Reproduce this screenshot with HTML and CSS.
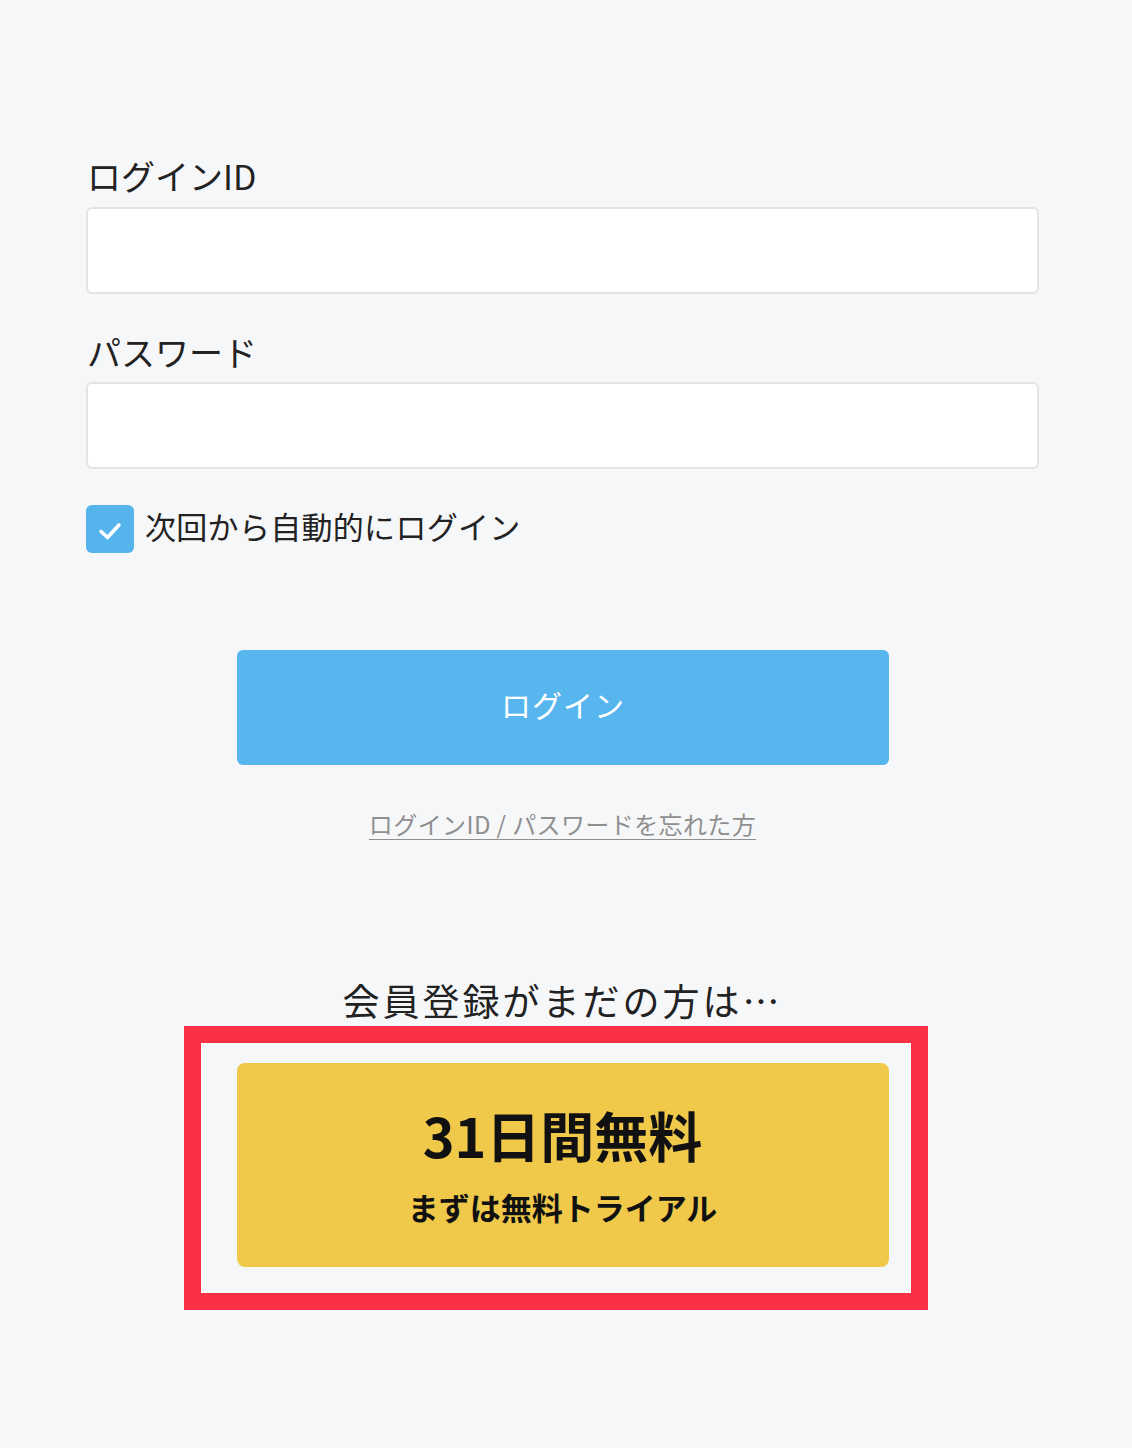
FILE: index.html
```html
<!DOCTYPE html>
<html lang="ja">
<head>
<meta charset="utf-8">
<title>ログイン</title>
<link rel="stylesheet" href="styles.css">
</head>
<body>
<main class="page">
  <form class="form">
    <label class="label">ログインID</label>
    <div class="input"></div>
    <label class="label label-2">パスワード</label>
    <div class="input"></div>
    <div class="remember">
      <span class="check">
        <svg width="24" height="20" viewBox="0 0 24 20"><path d="M3 10.5 L9.5 16.5 L21 4" fill="none" stroke="#fff" stroke-width="3.6" stroke-linecap="round" stroke-linejoin="round"/></svg>
      </span>
      <span class="remember-text">次回から自動的にログイン</span>
    </div>
    <div class="login-wrap"><div class="btn-login">ログイン</div></div>
    <div class="forgot"><a>ログインID / パスワードを忘れた方</a></div>
  </form>
  <section class="signup">
    <p class="signup-lead">会員登録がまだの方は…</p>
    <div class="trial-wrap">
      <div class="btn-trial">
        <span class="trial-big">31日間無料</span>
        <span class="trial-small">まずは無料トライアル</span>
      </div>
      <div class="highlight"></div>
    </div>
  </section>
</main>
</body>
</html>
```
FILE: styles.css
```css
html, body {
  margin: 0;
  padding: 0;
  background: #f6f7f9;
}
body {
  font-family: "Noto Sans CJK JP", "Noto Sans", sans-serif;
  color: #222;
  width: 1132px;
  height: 1448px;
  overflow: hidden;
}
.page {
  padding: 152px 93px 0 86px;
}
.form {
  display: flex;
  flex-direction: column;
}
.label {
  font-size: 34px;
  line-height: 48px;
  height: 48px;
  margin: 0 0 7px 1px;
  color: #222;
}
.label-2 {
  margin-top: 34px;
  margin-bottom: 6px;
}
.input {
  height: 83px;
  background: #fff;
  border: 2px solid #e4e4e6;
  border-radius: 6px;
}
.remember {
  display: flex;
  align-items: center;
  margin-top: 36px;
  gap: 11px;
  height: 48px;
}
.check {
  width: 48px;
  height: 48px;
  border-radius: 6px;
  background: #56b4ec;
  display: flex;
  align-items: center;
  justify-content: center;
}
.check svg { margin-top: 3px; }
.remember-text {
  font-size: 31px;
  line-height: 42px;
  letter-spacing: 0.3px;
  color: #222;
  margin-bottom: 6px;
}
.login-wrap {
  display: flex;
  justify-content: center;
  margin-top: 97px;
}
.btn-login {
  width: 652px;
  height: 115px;
  margin-left: 1px;
  background: #58b6ee;
  border-radius: 6px;
  color: #fff;
  font-size: 30px;
  display: flex;
  align-items: center;
  justify-content: center;
  letter-spacing: 1px;
  box-sizing: border-box;
  padding-bottom: 8px;
}
.forgot {
  margin-top: 44px;
  text-align: center;
  font-size: 24px;
  line-height: 30px;
  letter-spacing: 0.4px;
}
.forgot a {
  color: #8f8f8f;
  text-decoration: underline;
  text-underline-offset: 5px;
  text-decoration-thickness: 1px;
}
.signup {
  margin-top: 136px;
  display: flex;
  flex-direction: column;
  align-items: center;
}
.signup-lead {
  margin: 0;
  font-size: 37px;
  line-height: 50px;
  letter-spacing: 3px;
  color: #222;
}
.trial-wrap {
  position: relative;
  margin-top: 38px;
}
.btn-trial {
  width: 652px;
  height: 204px;
  background: #f0c94b;
  border-radius: 8px;
  display: flex;
  flex-direction: column;
  align-items: center;
  justify-content: center;
  color: #111;
  font-weight: 700;
}
.trial-big {
  font-size: 54px;
  line-height: 64px;
  margin-top: 0;
}
.trial-small {
  font-size: 31px;
  line-height: 40px;
  margin-top: 20px;
}
.highlight {
  position: absolute;
  left: -53px;
  top: -37px;
  width: 710px;
  height: 250px;
  border: 17px solid #fc3044;
}
```
